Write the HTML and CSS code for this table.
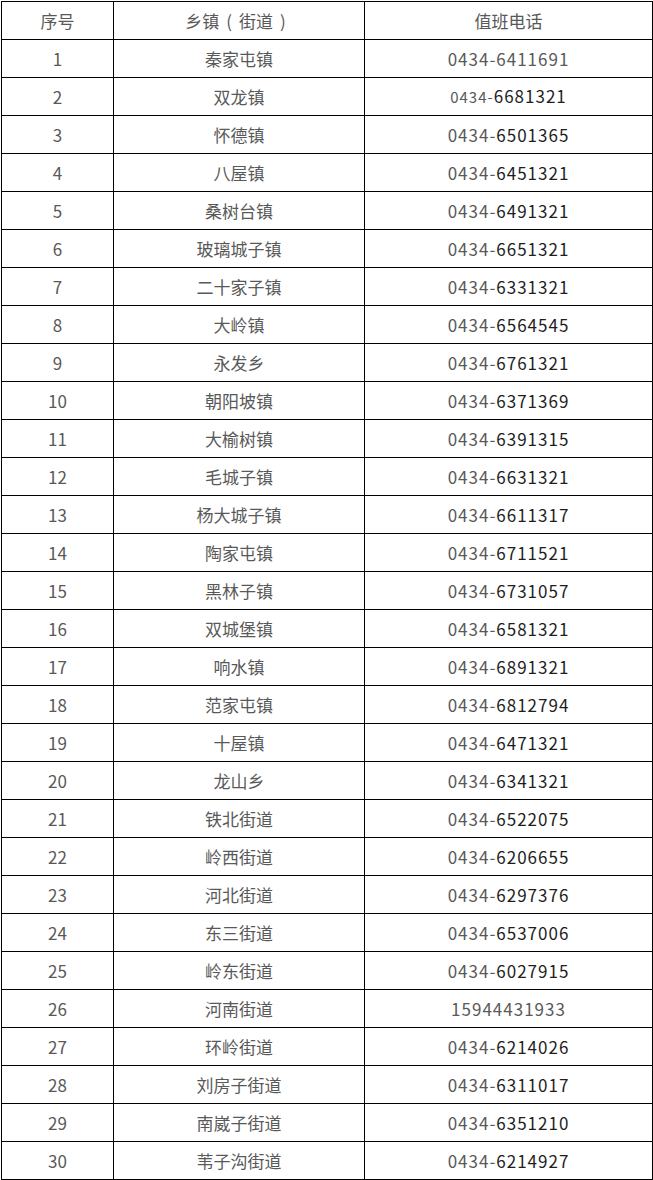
FILE: index.html
```html
<!DOCTYPE html>
<html lang="zh-CN">
<head>
<meta charset="utf-8">
<link rel="stylesheet" href="styles.css">
</head>
<body>
<table class="duty">
<colgroup><col class="c1"><col class="c2"><col class="c3"></colgroup>
<thead>
<tr><th>序号</th><th>乡镇<span class="paren">(</span>街道<span class="paren">)</span></th><th>值班电话</th></tr>
</thead>
<tbody>
<tr><td>1</td><td>秦家屯镇</td><td>0434-6411691</td></tr>
<tr><td>2</td><td>双龙镇</td><td><span class="pre-s">0434-</span><span class="dk">6681321</span></td></tr>
<tr><td>3</td><td>怀德镇</td><td>0434-<span class="dk">6501365</span></td></tr>
<tr><td>4</td><td>八屋镇</td><td>0434-<span class="dk">6451321</span></td></tr>
<tr><td>5</td><td>桑树台镇</td><td>0434-<span class="dk">6491321</span></td></tr>
<tr><td>6</td><td>玻璃城子镇</td><td>0434-<span class="dk">6651321</span></td></tr>
<tr><td>7</td><td>二十家子镇</td><td>0434-<span class="dk">6331321</span></td></tr>
<tr><td>8</td><td>大岭镇</td><td>0434-<span class="dk">6564545</span></td></tr>
<tr><td>9</td><td>永发乡</td><td>0434-<span class="dk">6761321</span></td></tr>
<tr><td>10</td><td>朝阳坡镇</td><td>0434-<span class="dk">6371369</span></td></tr>
<tr><td>11</td><td>大榆树镇</td><td>0434-<span class="dk">6391315</span></td></tr>
<tr><td>12</td><td>毛城子镇</td><td>0434-<span class="dk">6631321</span></td></tr>
<tr><td>13</td><td>杨大城子镇</td><td>0434-<span class="dk">6611317</span></td></tr>
<tr><td>14</td><td>陶家屯镇</td><td>0434-<span class="dk">6711521</span></td></tr>
<tr><td>15</td><td>黑林子镇</td><td>0434-<span class="dk">6731057</span></td></tr>
<tr><td>16</td><td>双城堡镇</td><td>0434-<span class="dk">6581321</span></td></tr>
<tr><td>17</td><td>响水镇</td><td>0434-<span class="dk">6891321</span></td></tr>
<tr><td>18</td><td>范家屯镇</td><td>0434-<span class="dk">6812794</span></td></tr>
<tr><td>19</td><td>十屋镇</td><td>0434-<span class="dk">6471321</span></td></tr>
<tr><td>20</td><td>龙山乡</td><td>0434-<span class="dk">6341321</span></td></tr>
<tr><td>21</td><td>铁北街道</td><td>0434-<span class="dk">6522075</span></td></tr>
<tr><td>22</td><td>岭西街道</td><td>0434-<span class="dk">6206655</span></td></tr>
<tr><td>23</td><td>河北街道</td><td>0434-<span class="dk">6297376</span></td></tr>
<tr><td>24</td><td>东三街道</td><td>0434-<span class="dk">6537006</span></td></tr>
<tr><td>25</td><td>岭东街道</td><td>0434-<span class="dk">6027915</span></td></tr>
<tr><td>26</td><td>河南街道</td><td>15944431933</td></tr>
<tr><td>27</td><td>环岭街道</td><td>0434-<span class="dk">6214026</span></td></tr>
<tr><td>28</td><td>刘房子街道</td><td>0434-<span class="dk">6311017</span></td></tr>
<tr><td>29</td><td>南崴子街道</td><td>0434-<span class="dk">6351210</span></td></tr>
<tr><td>30</td><td>苇子沟街道</td><td>0434-<span class="dk">6214927</span></td></tr>
</tbody>
</table>
</body>
</html>
```

FILE: styles.css
```css
html, body {
  margin: 0;
  padding: 0;
  background: #ffffff;
}
body {
  padding: 1px 0 0 1px;
  font-family: "Noto Sans CJK SC", "Noto Sans", sans-serif;
  color: #595959;
}
.duty {
  border-collapse: collapse;
  table-layout: fixed;
  width: 651px;
  font-size: 17px;
}
.c1 { width: 112px; }
.c2 { width: 251px; }
.c3 { width: 288px; }
.duty th,
.duty td {
  border: 1px solid #000;
  height: 38px;
  padding: 0;
  text-align: center;
  vertical-align: middle;
  font-weight: normal;
  line-height: 20px;
  box-sizing: border-box;
}
.paren {
  display: inline-block;
  margin: 0 7px;
}
.duty td:nth-child(3) {
  letter-spacing: 1px;
}
.dk { color: #1e1e1e; }
.pre-s { font-size: 15px; }
```
